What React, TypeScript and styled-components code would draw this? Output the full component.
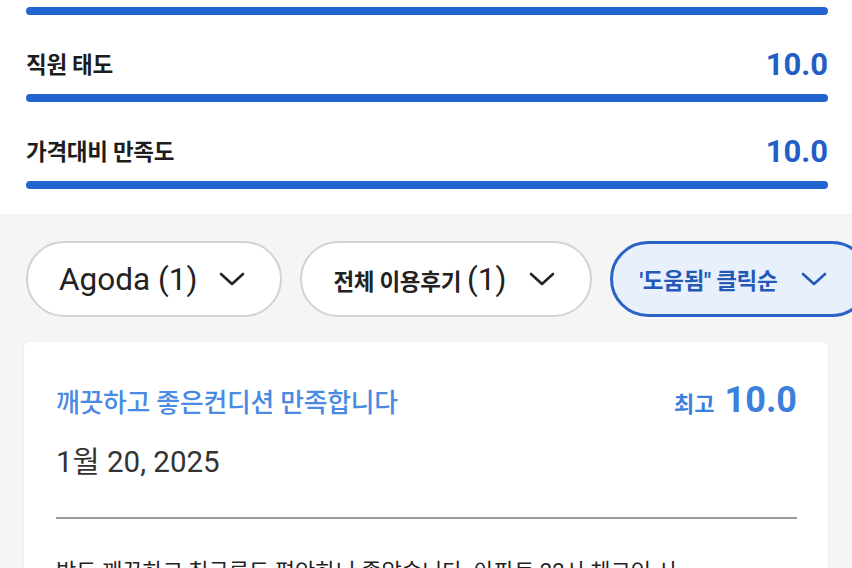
import React from "react";
import styled, { createGlobalStyle, css } from "styled-components";

const Global = createGlobalStyle`
  html, body { margin: 0; padding: 0; }
  body {
    background: #f5f5f5;
    font-family: Roboto, "Noto Sans CJK KR", "Noto Sans", sans-serif;
    -webkit-font-smoothing: antialiased;
  }
`;

const Page = styled.div`
  width: 852px;
  height: 568px;
  overflow: hidden;
  background: #f5f5f5;
`;

const RatingSection = styled.section`
  background: #ffffff;
  padding: 7px 24px 25px 26px;
`;

const Bar = styled.div`
  height: 8px;
  border-radius: 4px;
  background: #2264d0;
`;

const RatingRow = styled.div`
  display: flex;
  justify-content: space-between;
  align-items: center;
  height: 40px;
  padding: 28px 0 11px;
`;

const RatingLabel = styled.span`
  font-size: 22.5px;
  font-weight: 700;
  color: #1d1d1d;
  letter-spacing: -0.3px;
`;

const RatingScore = styled.span`
  font-size: 31px;
  font-weight: 700;
  color: #1f5fc6;
  line-height: 40px;
  padding-top: 4px;
`;

const FilterRow = styled.div`
  display: flex;
  gap: 18px;
  padding: 27px 0 25px 26px;
  overflow: hidden;
`;

const Pill = styled.div<{ $active?: boolean }>`
  flex-shrink: 0;
  box-sizing: border-box;
  height: 76px;
  display: flex;
  align-items: center;
  gap: 22px;
  padding: 0 35px 0 31px;
  border-radius: 38px;
  border: 2px solid #d3d3d3;
  background: #ffffff;
  color: #222222;
  font-size: 31.5px;
  ${(p) =>
    p.$active &&
    css`
      border: 3px solid #2a63c7;
      background: #e8f0fc;
      color: #2459b8;
      gap: 24px;
      padding: 0 40px 0 27px;
    `}
`;

const PillText = styled.span`
  display: flex;
  align-items: baseline;
  white-space: nowrap;
`;

const KoPart = styled.span<{ $active?: boolean }>`
  font-size: 22.5px;
  font-weight: 700;
  letter-spacing: -0.3px;
  margin-right: ${(p) => (p.$active ? "0" : "6px")};
`;

const Chevron = styled.svg`
  width: 26px;
  height: 14px;
  flex-shrink: 0;
`;

const Card = styled.article`
  margin: 0 24px;
  background: #ffffff;
  border-radius: 6px;
  box-shadow: 0 1px 3px rgba(0, 0, 0, 0.07);
  padding: 38px 31px 40px 32px;
`;

const CardHeader = styled.div`
  display: flex;
  justify-content: space-between;
  align-items: center;
  height: 40px;
`;

const Title = styled.h3`
  margin: 0;
  font-size: 25.8px;
  font-weight: 500;
  color: #4a8ae2;
  letter-spacing: -0.2px;
`;

const Score = styled.div`
  display: flex;
  align-items: baseline;
  gap: 10px;
  color: #3a80dc;
  font-weight: 700;
`;

const ScoreLabel = styled.span`
  font-size: 22px;
`;

const ScoreValue = styled.span`
  font-size: 36px;
`;

const DateText = styled.div`
  margin-top: 24px;
  font-size: 29.5px;
  line-height: 36px;
  color: #333333;
`;

const Divider = styled.hr`
  margin: 37px 0 0;
  border: none;
  height: 2px;
  background: #9a9a9a;
`;

const Body = styled.p`
  margin: 36px 0 0;
  font-size: 22px;
  line-height: 34px;
  color: #222222;
  white-space: nowrap;
`;

const ChevronIcon = ({ color }: { color: string }) => (
  <Chevron viewBox="0 0 26 14" fill="none">
    <polyline
      points="2,2 13,12 24,2"
      stroke={color}
      strokeWidth="2.6"
      strokeLinecap="round"
      strokeLinejoin="round"
    />
  </Chevron>
);

const ratings = [
  { label: "직원 태도", score: "10.0" },
  { label: "가격대비 만족도", score: "10.0" },
];

export default function App() {
  return (
    <Page>
      <Global />
      <RatingSection>
        <Bar />
        {ratings.map((r) => (
          <React.Fragment key={r.label}>
            <RatingRow>
              <RatingLabel>{r.label}</RatingLabel>
              <RatingScore>{r.score}</RatingScore>
            </RatingRow>
            <Bar />
          </React.Fragment>
        ))}
      </RatingSection>

      <FilterRow>
        <Pill>
          <PillText>Agoda (1)</PillText>
          <ChevronIcon color="#222" />
        </Pill>
        <Pill>
          <PillText>
            <KoPart>전체 이용후기</KoPart>(1)
          </PillText>
          <ChevronIcon color="#222" />
        </Pill>
        <Pill $active>
          <PillText>
            <KoPart $active>'도움됨" 클릭순</KoPart>
          </PillText>
          <ChevronIcon color="#2459b8" />
        </Pill>
      </FilterRow>

      <Card>
        <CardHeader>
          <Title>깨끗하고 좋은컨디션 만족합니다</Title>
          <Score>
            <ScoreLabel>최고</ScoreLabel>
            <ScoreValue>10.0</ScoreValue>
          </Score>
        </CardHeader>
        <DateText>1월 20, 2025</DateText>
        <Divider />
        <Body>방도 깨끗하고 침구류도 편안하니 좋았습니다. 아파트 22시 체크인 시</Body>
      </Card>
    </Page>
  );
}
